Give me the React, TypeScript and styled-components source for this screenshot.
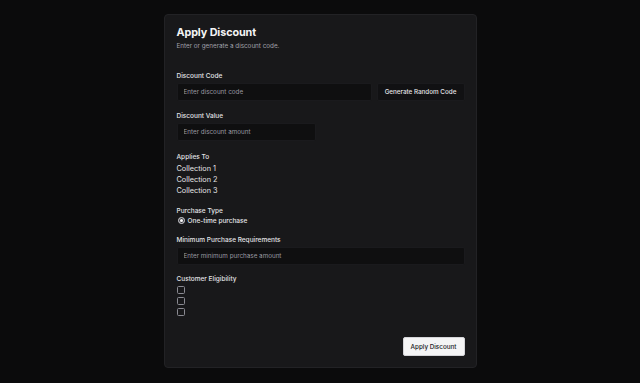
import { styled, createGlobalStyle } from "styled-components";

const GlobalStyle = createGlobalStyle`
  * { box-sizing: border-box; }
  html, body { margin: 0; padding: 0; background: #0b0b0c; }
  body {
    font-family: Inter, "Noto Sans", "Liberation Sans", sans-serif;
    color: #e4e4e7;
  }
  input { font-family: inherit; }
`;

const collections = ["Collection 1", "Collection 2", "Collection 3"];

function App() {
  return (
    <>
      <GlobalStyle />
      <Page>
        <Card>
          <Title>Apply Discount</Title>
          <Subtitle>Enter or generate a discount code.</Subtitle>

          <Section $gap="20px">
            <Label>Discount Code</Label>
            <Row>
              <Input placeholder="Enter discount code" />
              <GhostButton>Generate Random Code</GhostButton>
            </Row>
          </Section>

          <Section>
            <Label>Discount Value</Label>
            <Input placeholder="Enter discount amount" $width="139px" />
          </Section>

          <Section $gap="11px">
            <Label>Applies To</Label>
            <List $offset="-1px">
              {collections.map((c) => (
                <Item key={c}>{c}</Item>
              ))}
            </List>
          </Section>

          <Section $gap="10px">
            <Label>Purchase Type</Label>
            <RadioRow>
              <Radio />
              <RadioText>One-time purchase</RadioText>
            </RadioRow>
          </Section>

          <Section $gap="10px">
            <Label>Minimum Purchase Requirements</Label>
            <Input placeholder="Enter minimum purchase amount" />
          </Section>

          <Section $gap="9px">
            <Label>Customer Eligibility</Label>
            <List>
              {[0, 1, 2].map((i) => (
                <CheckRow key={i}>
                  <Checkbox />
                </CheckRow>
              ))}
            </List>
          </Section>

          <Footer>
            <PrimaryButton>Apply Discount</PrimaryButton>
          </Footer>
        </Card>
      </Page>
    </>
  );
}

const Page = styled.div`
  width: 640px;
  height: 383px;
  display: flex;
  justify-content: center;
  padding-top: 14px;
`;

const Card = styled.div`
  width: 313px;
  height: 354px;
  background: #18181a;
  border: 1px solid #222225;
  border-radius: 4px;
  padding: 11px 11px 11px 12px;
  display: flex;
  flex-direction: column;
`;

const Title = styled.div`
  font-size: 10.8px;
  line-height: 14px;
  font-weight: 700;
  color: #f4f4f5;
  letter-spacing: -0.1px;
`;

const Subtitle = styled.div`
  font-size: 6.3px;
  line-height: 9px;
  color: #a1a1aa;
  margin-top: 2px;
`;

const Section = styled.div<{ $gap?: string }>`
  display: flex;
  flex-direction: column;
  margin-top: ${({ $gap }) => $gap || "10px"};
`;

const Label = styled.div`
  font-size: 6.5px;
  line-height: 10px;
  font-weight: 500;
  color: #e4e4e7;
  margin-bottom: 2px;
`;

const Row = styled.div`
  display: flex;
  gap: 5px;
`;

const Input = styled.input<{ $width?: string }>`
  width: ${({ $width }) => $width || "100%"};
  min-width: 0;
  flex: ${({ $width }) => ($width ? "none" : "1 1 auto")};
  height: 18px;
  background: #0f0f10;
  border: 1px solid #1a1a1d;
  border-radius: 2px;
  padding: 0 6px;
  font-size: 6.3px;
  color: #e4e4e7;
  outline: none;
  &::placeholder { color: #9a9aa2; }
`;

const GhostButton = styled.button`
  flex: none;
  width: 88px;
  height: 18px;
  background: #111113;
  border: 1px solid #1a1a1d;
  border-radius: 2px;
  color: #e4e4e7;
  font-family: inherit;
  font-size: 6.3px;
  font-weight: 500;
  padding: 0;
  cursor: pointer;
`;

const List = styled.div<{ $offset?: string }>`
  display: flex;
  flex-direction: column;
  margin-top: ${({ $offset }) => $offset || "-2px"};
`;

const Item = styled.div`
  font-size: 7.3px;
  line-height: 11px;
  color: #e4e4e7;
`;

const RadioRow = styled.div`
  display: flex;
  align-items: center;
  gap: 3px;
  height: 9px;
  margin-top: -2px;
  padding-left: 1px;
`;

const Radio = styled.span`
  width: 7px;
  height: 7px;
  border-radius: 50%;
  background: #3f3f46;
  border: 1px solid #d4d4d8;
  position: relative;
  &::after {
    content: "";
    position: absolute;
    left: 1px;
    top: 1px;
    width: 3px;
    height: 3px;
    border-radius: 50%;
    background: #fafafa;
  }
`;

const RadioText = styled.span`
  font-size: 6.5px;
  font-weight: 500;
  color: #e4e4e7;
`;

const CheckRow = styled.div`
  height: 11px;
  display: flex;
  align-items: center;
`;

const Checkbox = styled.span`
  width: 8px;
  height: 8px;
  border: 1px solid #8a8a92;
  border-radius: 1.5px;
  background: transparent;
`;

const Footer = styled.div`
  margin-top: auto;
  display: flex;
  justify-content: flex-end;
`;

const PrimaryButton = styled.button`
  width: 62px;
  height: 19px;
  background: #f4f4f5;
  border: 1px solid #d4d4d8;
  border-radius: 2px;
  color: #18181b;
  font-family: inherit;
  font-size: 6.3px;
  font-weight: 500;
  padding: 0;
  cursor: pointer;
`;

export default App;
